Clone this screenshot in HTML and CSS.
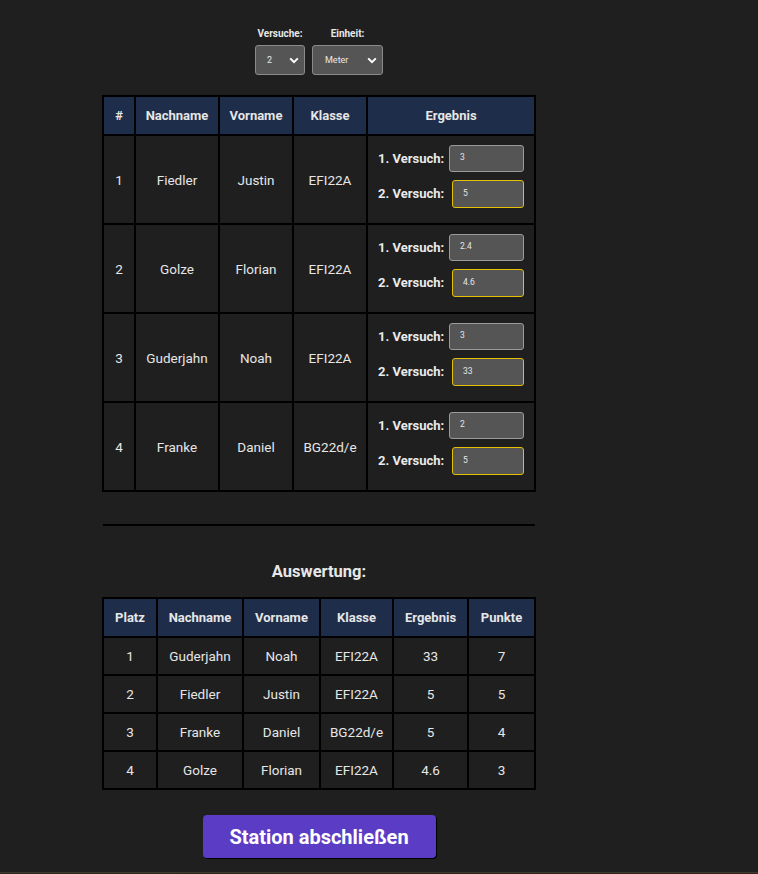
FILE: index.html
```html
<!DOCTYPE html>
<html lang="de">
<head>
<meta charset="utf-8">
<title>Station</title>
<link rel="stylesheet" href="styles.css">
</head>
<body>
<div class="main">
  <div class="controls">
    <div class="ctl">
      <div class="ctl-label">Versuche:</div>
      <div class="sel sel-small"><span>2</span><svg viewBox="0 0 10 7" width="10" height="7"><path d="M1.2 1.4 L5 5.2 L8.8 1.4" fill="none" stroke="#fff" stroke-width="2"/></svg></div>
    </div>
    <div class="ctl">
      <div class="ctl-label">Einheit:</div>
      <div class="sel sel-wide"><span>Meter</span><svg viewBox="0 0 10 7" width="10" height="7"><path d="M1.2 1.4 L5 5.2 L8.8 1.4" fill="none" stroke="#fff" stroke-width="2"/></svg></div>
    </div>
  </div>

  <table class="tbl t1">
    <colgroup><col class="c1"><col class="c2"><col class="c3"><col class="c4"><col class="c5"></colgroup>
    <thead><tr><th>#</th><th>Nachname</th><th>Vorname</th><th>Klasse</th><th>Ergebnis</th></tr></thead>
    <tbody>
      <tr><td>1</td><td>Fiedler</td><td>Justin</td><td>EFI22A</td><td><div class="res">
        <div class="att"><b>1. Versuch:</b><span class="inp">3</span></div>
        <div class="att second"><b>2. Versuch:</b><span class="inp focus">5</span></div></div></td></tr>
      <tr><td>2</td><td>Golze</td><td>Florian</td><td>EFI22A</td><td><div class="res">
        <div class="att"><b>1. Versuch:</b><span class="inp">2.4</span></div>
        <div class="att second"><b>2. Versuch:</b><span class="inp focus">4.6</span></div></div></td></tr>
      <tr><td>3</td><td>Guderjahn</td><td>Noah</td><td>EFI22A</td><td><div class="res">
        <div class="att"><b>1. Versuch:</b><span class="inp">3</span></div>
        <div class="att second"><b>2. Versuch:</b><span class="inp focus">33</span></div></div></td></tr>
      <tr><td>4</td><td>Franke</td><td>Daniel</td><td>BG22d/e</td><td><div class="res">
        <div class="att"><b>1. Versuch:</b><span class="inp">2</span></div>
        <div class="att second"><b>2. Versuch:</b><span class="inp focus">5</span></div></div></td></tr>
    </tbody>
  </table>

  <hr class="divider">

  <h2 class="title">Auswertung:</h2>

  <table class="tbl t2">
    <colgroup><col class="d1"><col class="d2"><col class="d3"><col class="d4"><col class="d5"><col class="d6"></colgroup>
    <thead><tr><th>Platz</th><th>Nachname</th><th>Vorname</th><th>Klasse</th><th>Ergebnis</th><th>Punkte</th></tr></thead>
    <tbody>
      <tr><td>1</td><td>Guderjahn</td><td>Noah</td><td>EFI22A</td><td>33</td><td>7</td></tr>
      <tr><td>2</td><td>Fiedler</td><td>Justin</td><td>EFI22A</td><td>5</td><td>5</td></tr>
      <tr><td>3</td><td>Franke</td><td>Daniel</td><td>BG22d/e</td><td>5</td><td>4</td></tr>
      <tr><td>4</td><td>Golze</td><td>Florian</td><td>EFI22A</td><td>4.6</td><td>3</td></tr>
    </tbody>
  </table>

  <button class="btn">Station abschließen</button>
</div>
<div class="strip"></div>
</body>
</html>
```
FILE: styles.css
```css
html, body {
  margin: 0;
  padding: 0;
  background: #1f1f1f;
}
body {
  font-family: Roboto, "Liberation Sans", sans-serif;
  color: #e4e4e4;
}
.main {
  width: 638px;
  display: flex;
  flex-direction: column;
  align-items: center;
  padding-top: 27px;
}
.controls {
  display: flex;
  gap: 7px;
}
.ctl {
  display: flex;
  flex-direction: column;
  align-items: center;
}
.ctl-label {
  font-size: 10px;
  font-weight: 700;
  color: #e8e8e8;
  line-height: 14px;
  margin-bottom: 4px;
}
.sel {
  box-sizing: border-box;
  height: 30px;
  background: #555;
  border: 1px solid #8a8a8a;
  border-radius: 3px;
  display: flex;
  align-items: center;
  justify-content: space-between;
  font-size: 9px;
  color: #e8e8e8;
}
.sel-small { width: 50px; padding: 0 5px 0 11px; }
.sel-wide { width: 71px; padding: 0 5px 0 12px; }
.sel svg { display: block; margin-top: 1px; }

.tbl {
  border-collapse: collapse;
  border: 2px solid #000;
  width: 432px;
  table-layout: fixed;
}
.tbl th, .tbl td {
  border: 2px solid #000;
  text-align: center;
  padding: 0;
}
.tbl th {
  background: #1e2d4a;
  font-weight: 700;
  font-size: 13px;
  color: #e6e6e6;
}
.tbl td {
  font-size: 13.5px;
  color: #e6e6e6;
}
.t1 { margin-top: 20px; }
.t1 th { height: 37px; }
.t1 td { height: 87px; }
.c1 { width: 32px; } .c2 { width: 84px; } .c3 { width: 74px; } .c4 { width: 74px; } .c5 { width: 168px; }

.res {
  display: flex;
  flex-direction: column;
  align-items: center;
  gap: 8px;
  padding-bottom: 7px;
}
.att {
  display: flex;
  align-items: center;
  width: 146px;
  justify-content: space-between;
}
.att b {
  font-size: 13px;
  font-weight: 700;
  color: #eaeaea;
}
.inp {
  box-sizing: border-box;
  width: 75px;
  height: 27px;
  background: #555;
  border: 1px solid #9a9a9a;
  border-radius: 3px;
  font-size: 8.5px;
  color: #e6e6e6;
  text-align: left;
  padding-left: 10px;
  line-height: 23px;
}
.inp.focus {
  width: 72px;
  height: 28px;
  border-color: #e5c000;
  line-height: 24px;
}

.divider {
  width: 432px;
  border: 0;
  height: 2px;
  background: #000;
  margin: 32px 0 0;
}
.title {
  font-size: 16.5px;
  font-weight: 700;
  margin: 36px 0 0;
  color: #e8e8e8;
  line-height: 20px;
}
.t2 { margin-top: 15px; }
.t2 th { height: 37px; }
.t2 td { height: 36px; }
.d1 { width: 54px; } .d2 { width: 86px; } .d3 { width: 77px; } .d4 { width: 73px; } .d5 { width: 75px; } .d6 { width: 67px; }

.btn {
  margin-top: 25px;
  width: 233px;
  height: 43px;
  background: #5b3cc4;
  border: 0;
  border-radius: 4px;
  color: #fff;
  font-family: inherit;
  font-size: 20px;
  font-weight: 700;
  box-shadow: 1px 1px 0 #000;
  cursor: pointer;
}
.strip {
  margin-top: 14px;
  height: 6px;
  background: linear-gradient(90deg, #2c2a1e, #2c2418 60%, #3a1f1a);
  border-top: 1px solid #3b3a2e;
}
```
